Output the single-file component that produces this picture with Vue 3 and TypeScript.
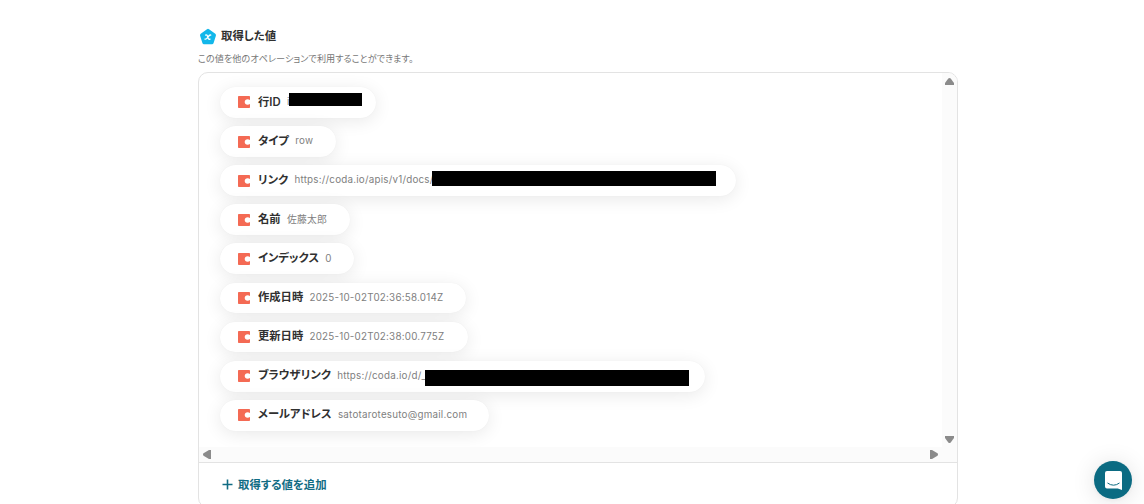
<script setup lang="ts">
interface FieldMask {
  left: number
  top: number
  width: number
  height: number
}

interface OutputField {
  key: string
  label: string
  value: string
  width: number
  mask?: FieldMask
}

const fields: OutputField[] = [
  { key: 'id', label: '行ID', value: 'i', width: 156, mask: { left: 69, top: 6, width: 73, height: 13 } },
  { key: 'type', label: 'タイプ', value: 'row', width: 116 },
  {
    key: 'href',
    label: 'リンク',
    value: 'https://coda.io/apis/v1/docs/',
    width: 516,
    mask: { left: 212, top: 6, width: 284, height: 15 },
  },
  { key: 'name', label: '名前', value: '佐藤太郎', width: 130 },
  { key: 'index', label: 'インデックス', value: '0', width: 134 },
  { key: 'createdAt', label: '作成日時', value: '2025-10-02T02:36:58.014Z', width: 246 },
  { key: 'updatedAt', label: '更新日時', value: '2025-10-02T02:38:00.775Z', width: 248 },
  {
    key: 'browserLink',
    label: 'ブラウザリンク',
    value: 'https://coda.io/d/_',
    width: 485,
    mask: { left: 205, top: 9, width: 264, height: 16 },
  },
  { key: 'email', label: 'メールアドレス', value: 'satotarotesuto@gmail.com', width: 269 },
]

function maskStyle(mask: FieldMask) {
  return {
    left: mask.left + 'px',
    top: mask.top + 'px',
    width: mask.width + 'px',
    height: mask.height + 'px',
  }
}
</script>

<template>
  <main class="page">
    <section class="output">
      <header class="output-header">
        <svg class="output-icon" viewBox="0 0 18 18">
          <path
            d="M8 1.2Q9 .5 10 1.2L16.3 5.8Q17.3 6.6 16.9 7.8L14.6 15Q14.2 16.2 13 16.2H5Q3.8 16.2 3.4 15L1.1 7.8Q.7 6.6 1.7 5.8Z"
            fill="#12b7ea"
          />
          <path
            d="M6.6 7.1C8 6.6 8.3 7.4 8.7 8.9S9.6 11.8 11 11.1M11.7 7.1C10.5 6.5 9.4 8.4 8.7 9.4S7.1 11.6 6 11.1"
            fill="none"
            stroke="#fff"
            stroke-width="1.3"
            stroke-linecap="round"
          />
        </svg>
        <h2 class="output-title">取得した値</h2>
      </header>
      <p class="output-note">この値を他のオペレーションで利用することができます。</p>

      <div class="panel">
        <div class="viewport">
          <ul class="fields">
            <li v-for="field in fields" :key="field.key" class="field" :style="{ width: field.width + 'px' }">
              <svg class="coda-icon" viewBox="0 0 12 12">
                <path
                  d="M.8 0H11.2Q12 0 12 .8V4C11.3 3.5 10.5 3.2 9.6 3.2C7.8 3.2 6.7 4.4 6.7 6S7.8 8.8 9.6 8.8C10.5 8.8 11.3 8.5 12 8V11.2Q12 12 11.2 12H.8Q0 12 0 11.2V.8Q0 0 .8 0Z"
                  fill="#f46a54"
                />
              </svg>
              <span class="field-label">{{ field.label }}</span>
              <span class="field-value">{{ field.value }}</span>
              <span v-if="field.mask" class="field-mask" :style="maskStyle(field.mask)"></span>
            </li>
          </ul>
          <div class="track track-y">
            <svg class="arrow-y" viewBox="0 0 9 7"><path d="M3.3 .5Q4.5-.5 5.7 .5L9 5V7H0V5Z" /></svg>
            <svg class="arrow-y" viewBox="0 0 9 7"><path d="M0 0H9V2L5.7 6.5Q4.5 7.5 3.3 6.5L0 2Z" /></svg>
          </div>
          <div class="track track-x">
            <svg class="arrow-x" viewBox="0 0 8 9"><path d="M6 0H8V9H6L.5 5.7Q-.5 4.5 .5 3.3Z" /></svg>
            <svg class="arrow-x" viewBox="0 0 8 9"><path d="M0 0H2L7.5 3.3Q8.5 4.5 7.5 5.7L2 9H0Z" /></svg>
          </div>
          <div class="corner"></div>
        </div>
        <button class="add" type="button">
          <svg class="add-icon" viewBox="0 0 11 11"><path d="M5.5 .5V10.5M.5 5.5H10.5" /></svg>
          <span class="add-text">取得する値を追加</span>
        </button>
      </div>
    </section>

    <button class="chat" type="button" aria-label="chat">
      <svg class="chat-icon" viewBox="0 0 17 19">
        <path d="M2 0H15Q17 0 17 2V19L12.8 17.4H2Q0 17.4 0 15.4V2Q0 0 2 0Z" fill="#fff" />
        <path d="M2.8 12.2Q8.5 16.4 14.2 12.2" fill="none" stroke="#0b6b82" stroke-width="1" stroke-linecap="round" />
      </svg>
    </button>
  </main>
</template>

<style>
body {
  margin: 0;
  background: #fff;
}
</style>

<style scoped>
.page {
  box-sizing: border-box;
  width: 1144px;
  height: 504px;
  padding: 27px 186px 0 198px;
  overflow: hidden;
  background: #fff;
  color: #303030;
  font-family: Inter, 'Noto Sans CJK JP', sans-serif;
  font-feature-settings: 'palt';
}

.output {
  width: 760px;
}

.output-header {
  display: flex;
  align-items: center;
  height: 18px;
}

.output-icon {
  width: 18px;
  height: 18px;
  margin: 1px 4px 0 1px;
}

.output-title {
  margin: 0;
  font-size: 11.4px;
  font-weight: 600;
  line-height: 18px;
}

.output-note {
  height: 13px;
  margin: 7px 0;
  color: #777;
  font-size: 9.1px;
  letter-spacing: 0.06px;
  line-height: 13px;
  white-space: nowrap;
}

.panel {
  box-sizing: border-box;
  height: 436px;
  border: 1px solid #e3e3e3;
  border-radius: 10px;
  overflow: hidden;
}

.viewport {
  display: grid;
  grid-template-columns: 743px 15px;
  grid-template-rows: 374px 15px;
  border-bottom: 1px solid #e3e3e3;
}

.fields {
  display: flex;
  flex-direction: column;
  gap: 8.3px;
  margin: 0;
  padding: 14.1px 21px 0;
  overflow: hidden;
  list-style: none;
}

.field {
  position: relative;
  display: flex;
  flex-shrink: 0;
  align-items: center;
  box-sizing: border-box;
  height: 30.8px;
  padding-left: 18px;
  border-radius: 16px;
  background: #fff;
  box-shadow: 0 3px 18px rgba(0, 0, 0, 0.09), 0 0 1px rgba(0, 0, 0, 0.06);
  white-space: nowrap;
}

.coda-icon {
  width: 12px;
  height: 12px;
  margin-right: 8px;
}

.field-label {
  margin-right: 6.3px;
  padding-bottom: 1.6px;
  font-size: 11.3px;
  font-weight: 600;
  line-height: 16px;
}

.field-value {
  padding-bottom: 0.5px;
  color: #808080;
  font-size: 9.8px;
  letter-spacing: 0.23px;
  line-height: 16px;
}

.field-mask {
  position: absolute;
  background: #000;
}

.track {
  display: flex;
  justify-content: space-between;
  align-items: center;
  background: #fbfbfb;
  fill: #8b8b8b;
}

.track-y {
  flex-direction: column;
  padding: 5px 0 4px;
}

.track-x {
  padding: 0 4px;
}

.corner {
  background: #fbfbfb;
}

.arrow-y {
  width: 9px;
  height: 7px;
}

.arrow-x {
  width: 8px;
  height: 9px;
}

.add {
  display: flex;
  align-items: center;
  gap: 5px;
  height: 43px;
  padding: 0 23px;
  border: 0;
  background: none;
  color: #116c84;
  font-family: inherit;
  font-feature-settings: inherit;
  font-size: 11.4px;
  font-weight: 600;
}

.add-icon {
  width: 11px;
  height: 11px;
  fill: none;
  stroke: currentColor;
  stroke-width: 1.6;
}

.add-text {
  padding-bottom: 2px;
}

.chat {
  position: fixed;
  right: 12px;
  bottom: 5px;
  display: flex;
  justify-content: center;
  align-items: center;
  width: 38px;
  height: 38px;
  padding: 0;
  border: 0;
  border-radius: 50%;
  background: #0b6b82;
  box-shadow: 0 1px 5px rgba(0, 0, 0, 0.06), 0 2px 24px rgba(0, 0, 0, 0.12);
}

.chat-icon {
  width: 17px;
  height: 19px;
}
</style>
